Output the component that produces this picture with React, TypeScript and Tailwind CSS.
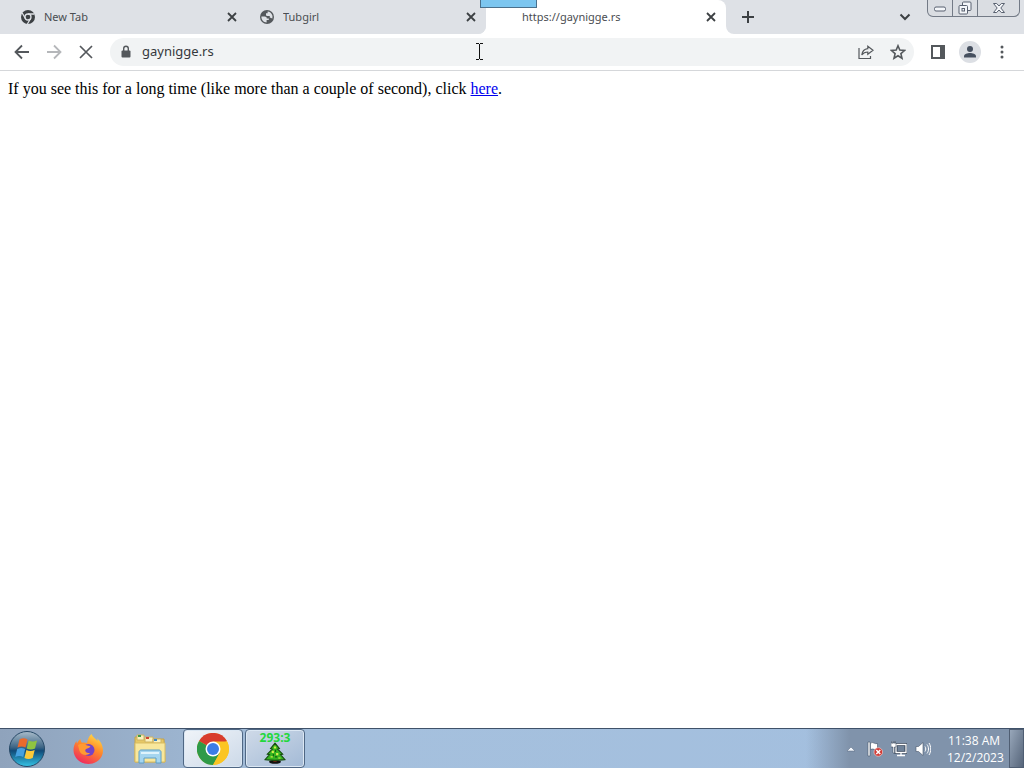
import type { ReactNode } from "react";

type Tab = { title: string; icon: ReactNode; active?: boolean };

const TABS: Tab[] = [
  { title: "New Tab", icon: <ChromeMono /> },
  { title: "Tubgirl", icon: <Globe /> },
  { title: "https://gaynigge.rs", icon: null, active: true },
];

function ChromeMono() {
  return (
    <svg viewBox="0 0 16 16" className="size-4">
      <circle cx="8" cy="8" r="7" fill="#3c4043" />
      <circle cx="8" cy="8" r="3" fill="none" stroke="#dee1e6" strokeWidth="1.3" />
      <path d="M8 5h6.5M5.4 9.5L2.2 4M10.6 9.5L7.4 15" stroke="#dee1e6" strokeWidth="1.3" />
    </svg>
  );
}

function Globe() {
  return (
    <svg viewBox="0 0 16 16" className="size-4">
      <circle cx="8" cy="8" r="7" fill="#54585c" />
      <path
        d="M2.4 7.6h3.2c1.6 0 2.2.8 2.2 2h2v1.5H7.6v2.4C4.6 13.4 2.2 11 2.4 7.6zM7 5.6V4.2h1.6V2.5c2 .2 3.9 1.5 4.6 3.5.5 1.4.4 2.7-.1 3.8-.3-.7-.9-1.1-1.7-1.1h-.6V7h-3C7.3 7 7 6.5 7 5.600z"
        fill="#dee1e6"
      />
    </svg>
  );
}

function Cross({ className }: { className: string }) {
  return (
    <svg viewBox="0 0 16 16" className={className} fill="none" stroke="currentColor" strokeWidth="1.8">
      <path d="M4 4l8 8M12 4l-8 8" />
    </svg>
  );
}

function TabItem({ tab }: { tab: Tab }) {
  return (
    <div
      className={`flex h-full min-w-0 shrink items-center pr-[7px] pl-3 ${
        tab.active ? "w-60 rounded-t-lg bg-white" : "w-[239px] bg-[#dee1e6]"
      }`}
    >
      <span className="size-4 shrink-0">{tab.icon}</span>
      <span className="ml-2 grow truncate text-[11px] text-[#4a4d51]">{tab.title}</span>
      <button aria-label={`Close ${tab.title}`} className="text-[#3c4043]">
        <Cross className="size-4" />
      </button>
    </div>
  );
}

function WindowButtons() {
  const line = { fill: "#f4f6f9", stroke: "#596170" };
  return (
    <div className="mr-1 flex h-[17px] self-start rounded-b-md border border-t-0 border-[#737a86] bg-[#dadde2]">
      <button aria-label="Minimize" className="flex w-6 items-end justify-center pb-1">
        <svg viewBox="0 0 14 6" className="h-[6px] w-[14px]">
          <rect x="1.5" y="1" width="11" height="4" rx="1.5" {...line} />
        </svg>
      </button>
      <button aria-label="Restore" className="flex w-[26px] items-center justify-center border-x border-[#737a86]">
        <svg viewBox="0 0 14 14" className="size-[14px]">
          <rect x="4.5" y="1" width="8.5" height="8.5" rx="1" {...line} />
          <rect x="1" y="4.5" width="8.5" height="8.5" rx="1" {...line} />
          <rect x="4" y="7.5" width="2.5" height="2.5" {...line} />
        </svg>
      </button>
      <button aria-label="Close window" className="flex w-[41px] items-center justify-center">
        <svg viewBox="0 0 14 12" className="h-3 w-[14px]">
          <path d="M1.5 1.5h3.2L7 4l2.3-2.5h3.2L8.8 6l3.7 4.5H9.3L7 8l-2.3 2.5H1.5L5.2 6z" {...line} />
        </svg>
      </button>
    </div>
  );
}

function TabStrip() {
  return (
    <header className="relative flex h-[34px] bg-[#dee1e6]">
      <div className="flex min-w-0 bg-white">
        <div className="flex min-w-0 items-center overflow-hidden rounded-br-lg bg-[#dee1e6] pl-2">
          <TabItem tab={TABS[0]} />
          <span className="-mr-px h-5 w-px bg-[#868a90]" />
          <TabItem tab={TABS[1]} />
        </div>
      </div>
      <div className="bg-[#dee1e6]">
        <TabItem tab={TABS[2]} />
      </div>
      <div className="flex grow bg-white">
        <div className="flex grow items-center rounded-bl-lg bg-[#dee1e6]">
          <button aria-label="New tab" className="ml-[14px] text-[#3c4043]">
            <svg viewBox="0 0 16 16" className="size-4" fill="none" stroke="currentColor" strokeWidth="2">
              <path d="M8 2v12M2 8h12" />
            </svg>
          </button>
          <button aria-label="Search tabs" className="mr-[14px] ml-auto text-[#3c4043]">
            <svg viewBox="0 0 16 16" className="size-4" fill="none" stroke="currentColor" strokeWidth="2">
              <path d="M3.5 5.5L8 10l4.5-4.5" />
            </svg>
          </button>
          <WindowButtons />
        </div>
      </div>
      <span className="absolute top-0 left-[480px] h-2 w-[57px] border border-t-0 border-[#4a708c] bg-[#7cc6f0]" />
    </header>
  );
}

function Toolbar() {
  return (
    <div className="flex h-[37px] items-center border-b border-[#d5d7da] bg-white text-[#54585c]">
      <div className="flex gap-4 pl-[14px]">
        <button aria-label="Back">
          <svg viewBox="0 0 16 16" className="size-4" fill="none" stroke="currentColor" strokeWidth="1.8">
            <path d="M15 8H2M8 1.5L1.5 8 8 14.5" />
          </svg>
        </button>
        <button aria-label="Forward" className="text-[#b5b7ba]">
          <svg viewBox="0 0 16 16" className="size-4" fill="none" stroke="currentColor" strokeWidth="1.8">
            <path d="M1 8h13M8 1.5L14.5 8 8 14.5" />
          </svg>
        </button>
        <button aria-label="Stop">
          <svg viewBox="0 0 16 16" className="size-4" fill="none" stroke="currentColor" strokeWidth="1.7">
            <path d="M2 2l12 12M14 2L2 14" />
          </svg>
        </button>
      </div>
      <div className="ml-4 flex h-7 grow items-center rounded-full bg-[#f1f3f4] px-2">
        <svg viewBox="0 0 16 16" className="size-4" fill="none">
          <rect x="3.5" y="6.5" width="9" height="7" rx="1" fill="#54585c" />
          <path d="M5.7 7V4.6a2.3 2.3 0 0 1 4.6 0V7" stroke="#54585c" strokeWidth="1.4" />
        </svg>
        <input
          aria-label="Address"
          readOnly
          value="gaynigge.rs"
          className="ml-2 min-w-0 grow bg-transparent text-[13px] text-[#35383c] outline-none"
        />
        <button aria-label="Share this page">
          <svg viewBox="0 0 16 16" className="size-4" fill="none" stroke="currentColor" strokeWidth="1.2">
            <path d="M1 4v10.500h11.500V12" />
            <path d="M9.8 2.200L15 6.300l-5.200 4V8C7 8 5.200 9 3.800 11c.4-3.500 2.600-6 6-6.400z" />
          </svg>
        </button>
        <button aria-label="Bookmark this tab" className="ml-4">
          <svg viewBox="0 0 16 16" className="size-4" fill="none" stroke="currentColor" strokeWidth="1.6">
            <path d="M8 1.8l1.8 4.3 4.7.4-3.6 3.1 1.1 4.6L8 11.7l-4 2.5 1.1-4.6-3.6-3.1 4.7-.4z" />
          </svg>
        </button>
      </div>
      <button aria-label="Side panel" className="ml-4">
        <svg viewBox="0 0 16 16" className="size-4">
          <path d="M1 1h14v14H1zM3 3v10h7V3z" fill="currentColor" fillRule="evenodd" />
        </svg>
      </button>
      <button aria-label="Profile" className="ml-[13px]">
        <svg viewBox="0 0 22 22" className="size-[22px]">
          <circle cx="11" cy="11" r="11" fill="#dcdfe4" />
          <circle cx="11" cy="8" r="3" fill="#46505f" />
          <path d="M5 16.5v-1.3C5 13 8.5 12 11 12s6 1 6 3.2v1.3z" fill="#46505f" />
        </svg>
      </button>
      <button aria-label="Menu" className="mr-[14px] ml-[13px]">
        <svg viewBox="0 0 16 16" className="size-4" fill="currentColor">
          <circle cx="8" cy="3" r="1.5" />
          <circle cx="8" cy="8" r="1.5" />
          <circle cx="8" cy="13" r="1.5" />
        </svg>
      </button>
    </div>
  );
}

function StartOrb() {
  return (
    <svg viewBox="0 0 38 38" className="size-[38px]">
      <defs>
        <linearGradient id="orb" x1="0" y1="0" x2="0" y2="1">
          <stop offset="0" stopColor="#a9bccb" />
          <stop offset="0.45" stopColor="#3d6585" />
          <stop offset="0.55" stopColor="#104a78" />
          <stop offset="1" stopColor="#35c4e6" />
        </linearGradient>
      </defs>
      <circle cx="19" cy="19" r="17.5" fill="url(#orb)" stroke="#274967" />
      <path d="M11.500 9.500c2.800-1.600 5.400-1.600 8 0l-2 8c-2.700-1.500-5.300-1.500-8 0z" fill="#ea6a2c" />
      <path d="M20.700 10.400c2.700 1.400 5.400 1.400 8.300 0l-2 8c-2.900 1.400-5.500 1.400-8.300 0z" fill="#8fc441" />
      <path d="M9.200 19c2.800-1.500 5.400-1.500 8 0l-2 8c-2.700-1.500-5.200-1.500-8 0z" fill="#45a0e0" />
      <path d="M18.400 20c2.700 1.400 5.400 1.400 8.300 0l-2 8c-2.900 1.400-5.500 1.400-8.300 0z" fill="#fbc93a" />
    </svg>
  );
}

function Firefox() {
  return (
    <svg viewBox="0 0 32 32" className="size-8">
      <defs>
        <linearGradient id="fox" x1="0.8" y1="0" x2="0.3" y2="1">
          <stop offset="0" stopColor="#ffe04a" />
          <stop offset="0.45" stopColor="#ff8a2a" />
          <stop offset="1" stopColor="#f0285f" />
        </linearGradient>
      </defs>
      <path
        d="M19.5 1c1 3 4 4.5 6 7 .2-1 0-2-.4-2.8C28.5 8 31 12.5 31 17.5 31 25.5 24.4 31 16.4 31S1.5 25 1.5 17c0-3.500 1-6.500 3-9 0 1 .1 1.800.5 2.500C6 8.500 7 7 8.500 6c0 1.500.5 2.800 1.500 3.700 2-.4 3.600-.2 5 .3C15.500 6.500 17 3 19.500 1z"
        fill="url(#fox)"
      />
      <circle cx="16.5" cy="17" r="6" fill="#7344c8" />
      <path
        d="M6 12c3-2 6-1.500 8 0 1.500 1 3.500.8 4.500 1.500-1 2-4 1.500-5 3-1 2 1.500 4 4.500 3.500-3 3.500-9 2-10.500-2z"
        fill="#ff9a31"
      />
    </svg>
  );
}

function Explorer() {
  return (
    <svg viewBox="0 0 34 32" className="h-8 w-[34px]">
      <path d="M2 4h8l1 2h20l1 23H2z" fill="#e6c864" stroke="#c4a24a" />
      <path d="M4 2h7v5H4zM12 4h8v5h-8zM20 6h8v4h-8z" fill="#fbf1bd" stroke="#cdb263" />
      <path d="M5 2h3v2H5z" fill="#3d9b47" />
      <path d="M13 4h3v2h-3z" fill="#cf4532" />
      <path d="M21 6h3v2h-3z" fill="#3d86c6" />
      <path d="M2 10h30v19H2z" fill="#f8e79c" stroke="#d9bd62" />
      <path d="M6 30V19c0-1 1-2 2-2h18c1 0 2 1 2 2v11h-5v-5H11v5z" fill="#a5d5ef" stroke="#5c9ec6" />
      <path d="M8 19h18v2H8z" fill="#dff3fc" />
    </svg>
  );
}

function ChromeColor() {
  return (
    <svg viewBox="0 0 32 32" className="size-8">
      <circle cx="16" cy="16" r="16" fill="#fbc524" />
      <path d="M16 16L2.1 8a16 16 0 0 1 27.800 0z" fill="#d83c2e" />
      <path d="M2.1 8A16 16 0 0 0 16 32l7-12-7-4z" fill="#2f9a48" />
      <path d="M16 8.500h14.100A16 16 0 0 1 16 32l6.500-12z" fill="#fbc524" />
      <circle cx="16" cy="16" r="7.500" fill="#fff" />
      <circle cx="16" cy="16" r="6" fill="#3c7de6" />
    </svg>
  );
}

function Tree() {
  return (
    <svg viewBox="0 0 20 20" className="size-[22px]">
      <ellipse cx="10" cy="18" rx="5.500" ry="1.800" fill="#111" />
      <path d="M8.500 15h3v3h-3z" fill="#7c2b12" />
      <path
        d="M10 1l4 5-1.500.5L17 11l-2 .5 4 4.500c-6 1-12 1-18 0l4-4.500-2-.5 4.500-4.500L6 6z"
        fill="#35b51f"
        stroke="#174d10"
      />
      <path d="M9 4h2v2H9zM7 8h2v2H7zM11 10h2v2h-2zM6 13h2v1H6zM13 14h2v1h-2z" fill="#d4ef4a" />
      <path d="M10 7h1v2h-1zM8 11h1v2H8zM10 13h2v1h-2z" fill="#135c12" />
    </svg>
  );
}

function Tray() {
  return (
    <div className="flex items-center bg-gradient-to-r from-transparent to-[#8093ab] to-20% pl-10">
      <button aria-label="Show hidden icons">
        <svg viewBox="0 0 10 16" className="h-4 w-[10px]">
          <path d="M5 6l4 4H1z" fill="#f4f8fd" stroke="#56677e" strokeWidth="0.5" />
        </svg>
      </button>
      <button aria-label="Action Center" className="ml-[11px]">
        <svg viewBox="0 0 16 16" className="size-4">
          <path d="M1 1h2v14H1z" fill="#fff" stroke="#45546a" strokeWidth="0.6" />
          <path d="M3.5 2c3-1.500 4 1.500 7 .5v6c-3 1-4-1.500-7 0z" fill="#fff" stroke="#45546a" strokeWidth="0.6" />
          <circle cx="11.3" cy="11" r="4.3" fill="#d23b36" stroke="#f7d6d4" strokeWidth="0.6" />
          <path d="M9.3 9l4 4M13.3 9l-4 4" stroke="#fff" strokeWidth="1.5" />
        </svg>
      </button>
      <button aria-label="Network" className="ml-2">
        <svg viewBox="0 0 16 16" className="size-4">
          <path d="M5 3.5h10v8H5z" fill="#6f8299" stroke="#334154" strokeWidth="3" />
          <path d="M5 3.5h10v8H5zM6 14.5h8M10 12v2" fill="none" stroke="#fff" strokeWidth="1.3" />
          <path d="M0 2h5v4H3.5v6H2V6H0zM1 0h1v2H1zM3.5 0h1v2h-1z" fill="#fff" stroke="#334154" strokeWidth="0.5" />
        </svg>
      </button>
      <button aria-label="Volume" className="ml-2">
        <svg viewBox="0 0 16 16" className="size-4">
          <path d="M1 5.5h2.500L8 1.500v13l-4.500-4H1z" fill="#fff" stroke="#45546a" strokeWidth="0.6" />
          <path
            d="M10 5.500c1 1.500 1 3.500 0 5M12 3.500c2 2.500 2 6.500 0 9M14 2c2.300 3.500 2.300 8.500 0 12"
            fill="none"
            stroke="#fff"
          />
        </svg>
      </button>
      <time className="ml-4 w-[54px] text-center text-xs leading-[17px] whitespace-nowrap text-white">
        11:38 AM
        <br />
        12/2/2023
      </time>
      <button
        aria-label="Show desktop"
        className="ml-2 h-full w-[15px] border border-[#4f5e73] bg-gradient-to-br from-[#98a7ba] to-[#56657a]"
      />
    </div>
  );
}

function Taskbar() {
  const running =
    "flex w-[60px] items-center justify-center rounded-sm border border-[#4f6784] shadow-[inset_0_0_0_1px_#dbe7f3]";
  return (
    <footer className="flex h-10 justify-between border-t border-[#3f5169] bg-gradient-to-r from-[#8fa3bc] via-[#a5c0dd] via-30% to-[#a3bfdf] font-['Open_Sans','Noto_Sans',sans-serif]">
      <div className="flex">
        <button aria-label="Start" className="ml-2 flex items-center">
          <StartOrb />
        </button>
        <button aria-label="Firefox" className="ml-[11px] flex w-[62px] items-center justify-center">
          <Firefox />
        </button>
        <button aria-label="Windows Explorer" className="flex w-[62px] items-center justify-center">
          <Explorer />
        </button>
        <button aria-label="Google Chrome" className={`ml-0.5 bg-gradient-to-br from-[#f0f4f9] to-[#ccd9e8] ${running}`}>
          <ChromeColor />
        </button>
        <button className={`ml-0.5 flex-col bg-gradient-to-br from-[#cfdae8] to-[#a3bad6] pb-1 ${running}`}>
          <span className="text-xs leading-4 font-bold text-[#22d83c]">293:3</span>
          <span className="-mt-1">
            <Tree />
          </span>
        </button>
      </div>
      <Tray />
    </footer>
  );
}

export default function App() {
  return (
    <div className="relative flex min-h-screen flex-col bg-white font-['Noto_Sans','Open_Sans',sans-serif]">
      <TabStrip />
      <Toolbar />
      <main className="grow p-2 font-['Liberation_Serif',serif] text-base leading-5 text-black">
        If you see this for a long time (like more than a couple of second), click{" "}
        <a href="#" className="text-[#0000ee] underline">
          here
        </a>
        .
      </main>
      <Taskbar />
      {/* text cursor over the address bar */}
      <svg viewBox="0 0 8 17" className="absolute top-[43px] left-[476px] h-[17px] w-2" fill="none" stroke="#111">
        <path d="M0 .5h3M4 .5h3M3.5 1v15M0 16.5h3M4 16.5h3" />
      </svg>
    </div>
  );
}
